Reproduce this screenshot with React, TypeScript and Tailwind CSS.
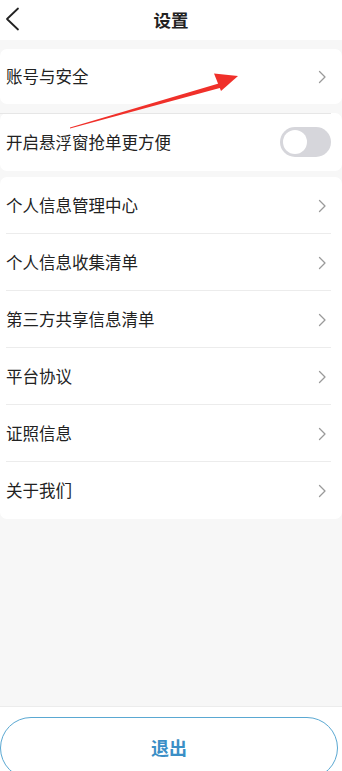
import React from "react";

const Chevron = () => (
  <svg width="9" height="14" viewBox="0 0 9 14" fill="none">
    <path d="M1.5 1.5L7 7L1.5 12.5" stroke="#9a9a9a" strokeWidth="1.3" strokeLinecap="round" strokeLinejoin="round" />
  </svg>
);

const Row = ({ label, last }: { label: string; last?: boolean }) => (
  <div className="h-[57px] flex items-center justify-between pl-[6px] pr-[15px] relative">
    <span className="text-[16.5px] text-[#222]">{label}</span>
    <Chevron />
    {!last && <div className="absolute left-[6px] right-[11px] bottom-0 h-px bg-[#ececec]" />}
  </div>
);

export default function App() {
  const font = { fontFamily: '"Noto Sans CJK SC", "Noto Sans", sans-serif' };
  return (
    <div className="w-[342px] h-[771px] bg-[#f7f7f7] flex flex-col relative overflow-hidden" style={font}>
      <div className="h-[40px] bg-white flex items-center justify-center relative shrink-0">
        <svg className="absolute left-[5px] top-[7px]" width="15" height="24" viewBox="0 0 15 24" fill="none">
          <path d="M13 1.5L2 12L13 22.5" stroke="#222" strokeWidth="1.8" strokeLinecap="round" strokeLinejoin="round" />
        </svg>
        <span className="text-[17.5px] font-bold text-[#222]">设置</span>
      </div>

      <div className="mt-[9px] bg-white rounded-[7px] h-[55px] flex items-center justify-between pl-[6px] pr-[15px]">
        <span className="text-[16.5px] text-[#222]">账号与安全</span>
        <Chevron />
      </div>

      <div className="mt-[9px] bg-white rounded-[7px] h-[58px] flex items-center justify-between pl-[6px] pr-[11px] relative">
        <div className="absolute left-0 right-[11px] top-0 h-px bg-[#e6e6e6]" />
        <span className="text-[16.5px] text-[#222]">开启悬浮窗抢单更方便</span>
        <div className="w-[51px] h-[30px] rounded-full bg-[#d6d6db] flex items-center pl-[3px]">
          <div className="w-[24px] h-[24px] rounded-full bg-white" />
        </div>
      </div>

      <div className="mt-[6px] bg-white rounded-[7px] flex flex-col">
        <Row label="个人信息管理中心" />
        <Row label="个人信息收集清单" />
        <Row label="第三方共享信息清单" />
        <Row label="平台协议" />
        <Row label="证照信息" />
        <Row label="关于我们" last />
      </div>

      <div className="flex-1" />

      <div className="h-[65px] bg-white border-t border-[#ececec] shrink-0 pt-[10px]">
        <div className="h-[62px] w-[338px] rounded-[31px] border border-[#5aa8d2] flex items-start justify-center pt-[16px]">
          <span className="text-[18px] font-bold text-[#3b8fc6]">退出</span>
        </div>
      </div>

      <svg className="absolute left-0 top-0 pointer-events-none" width="342" height="200" viewBox="0 0 342 200">
        <polygon points="70,127.6 222,82.5 223.5,87 70,128.4" fill="#f0302a" />
        <polygon points="238,76 214,73.5 221,91" fill="#f0302a" />
      </svg>
    </div>
  );
}
